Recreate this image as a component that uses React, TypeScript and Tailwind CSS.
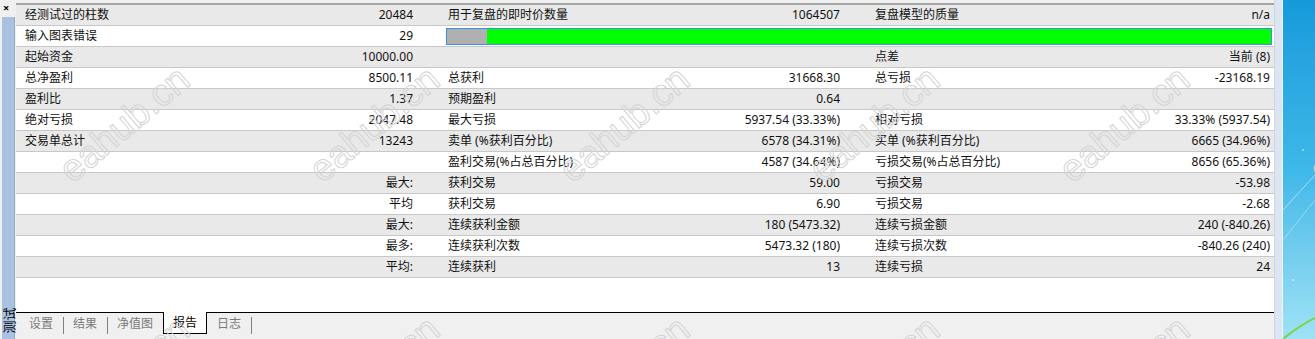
import React from "react";

type Row = [string, string, string, string, string, string];

const rows: Row[] = [
  ["经测试过的柱数", "20484", "用于复盘的即时价数量", "1064507", "复盘模型的质量", "n/a"],
  ["输入图表错误", "29", "", "", "", ""],
  ["起始资金", "10000.00", "", "", "点差", "当前 (8)"],
  ["总净盈利", "8500.11", "总获利", "31668.30", "总亏损", "-23168.19"],
  ["盈利比", "1.37", "预期盈利", "0.64", "", ""],
  ["绝对亏损", "2047.48", "最大亏损", "5937.54 (33.33%)", "相对亏损", "33.33% (5937.54)"],
  ["交易单总计", "13243", "卖单 (%获利百分比)", "6578 (34.31%)", "买单 (%获利百分比)", "6665 (34.96%)"],
  ["", "", "盈利交易(%占总百分比)", "4587 (34.64%)", "亏损交易(%占总百分比)", "8656 (65.36%)"],
  ["", "最大:", "获利交易", "59.00", "亏损交易", "-53.98"],
  ["", "平均", "获利交易", "6.90", "亏损交易", "-2.68"],
  ["", "最大:", "连续获利金额", "180 (5473.32)", "连续亏损金额", "240 (-840.26)"],
  ["", "最多:", "连续获利次数", "5473.32 (180)", "连续亏损次数", "-840.26 (240)"],
  ["", "平均:", "连续获利", "13", "连续亏损", "24"],
];

const font = "[font-family:'Noto_Sans','Noto_Sans_CJK_SC',sans-serif]";

function Group({ label, value, w, pl, pr }: { label: string; value: string; w: string; pl: string; pr: string }) {
  return (
    <div className={`${w} ${pl} ${pr} flex items-center justify-between h-full`}>
      <span className="whitespace-nowrap">{label}</span>
      <span className="whitespace-nowrap">{value}</span>
    </div>
  );
}

export default function App() {
  const wm = [124, 374, 624, 874, 1124, 1374];
  return (
    <div className={`relative w-[1315px] h-[339px] overflow-hidden bg-[#f0f0f0] flex ${font} text-[12px] text-[#111] leading-none`}>
      {/* left strip */}
      <div className="w-[16px] h-full flex flex-col">
        <div className="h-[17px] flex items-start pl-[3px] pt-[2px] text-[11px] font-bold text-black">×</div>
        <div className="flex-1 ml-[2px] w-[13px] bg-[#a8c2e0] border-r border-[#8fa9c8] flex flex-col justify-end">
          <div className="w-[13px] h-[34px] mb-[2px] flex items-center justify-center">
            <span className="inline-block whitespace-nowrap -rotate-90 text-[13px] text-black">测试</span>
          </div>
        </div>
      </div>

      {/* main panel */}
      <div className="w-[1258px] h-full flex flex-col">
        <div className="h-[3px]" />
        <div className="border-t-2 border-[#a6a6a6] flex flex-col">
          {rows.map((r, i) => (
            <div
              key={i}
              className={`h-[21px] flex border-b border-[#c8c8c8] ${i % 2 === 0 ? "bg-[#e9e9e9]" : "bg-white"}`}
            >
              <Group label={r[0]} value={r[1]} w="w-[423px]" pl="pl-[9px]" pr="pr-[26px]" />
              {i === 1 ? (
                <div className="flex-1 flex items-center pl-[7px] pr-[2px]">
                  <div className="w-full h-[17px] border border-[#3d8fe8] flex">
                    <div className="w-[40px] h-full bg-[#b0b0b0]" />
                    <div className="flex-1 h-full bg-[#00ff00]" />
                  </div>
                </div>
              ) : (
                <>
                  <Group label={r[2]} value={r[3]} w="w-[425px]" pl="pl-[9px]" pr="pr-[24px]" />
                  <Group label={r[4]} value={r[5]} w="w-[410px]" pl="pl-[11px]" pr="pr-[4px]" />
                </>
              )}
            </div>
          ))}
        </div>
        <div className="flex-1 bg-white" />
        {/* tabs */}
        <div className="h-[27px] border-t border-black flex items-start text-[#7a7a7a] bg-[#f0f0f0]">
          <div className="h-[21px] flex items-center pl-[13px]">设置</div>
          <div className="h-[17px] w-px bg-[#808080] mt-[4px] ml-[10px]" />
          <div className="h-[21px] flex items-center ml-[9px]">结果</div>
          <div className="h-[17px] w-px bg-[#808080] mt-[4px] ml-[10px]" />
          <div className="h-[21px] flex items-center ml-[9px]">净值图</div>
          <div className="h-[22px] -mt-px ml-[10px] bg-white border-x border-b border-black px-[9px] flex items-center text-black">报告</div>
          <div className="h-[21px] flex items-center ml-[10px]">日志</div>
          <div className="h-[17px] w-px bg-[#808080] mt-[4px] ml-[10px]" />
        </div>
      </div>

      {/* right frame + desktop */}
      <div className="w-[1px] h-full bg-[#cfd6de]" />
      <div className="w-[7px] h-full bg-[#dbe6f2]" />
      <div className="w-[1px] h-full bg-[#f4f8fc]" />
      <div className="flex-1 h-full bg-gradient-to-b from-[#169adb] via-[#3db8e8] to-[#9fe2f5] relative overflow-hidden">
        <svg className="absolute inset-0" width="32" height="339" viewBox="0 0 32 339">
          <path d="M0 210 L32 175" stroke="#ffffff" strokeOpacity="0.5" strokeWidth="1" />
          <path d="M0 240 L32 200" stroke="#ffffff" strokeOpacity="0.35" strokeWidth="1" />
          <path d="M0 339 Q16 326 32 318" stroke="#7bd44a" strokeWidth="2" fill="none" />
          <circle cx="20" cy="150" r="1" fill="#fff" fillOpacity="0.6" />
          <circle cx="10" cy="280" r="1" fill="#fff" fillOpacity="0.6" />
        </svg>
      </div>

      {/* watermarks */}
      {wm.map((x) =>
        [124, 374].map((y) => (
          <span
            key={`${x}-${y}`}
            aria-hidden="true"
            className="pointer-events-none absolute [font-family:'Liberation_Sans',sans-serif] text-[38px] text-transparent [-webkit-text-stroke:1px_#d4d4d4] whitespace-nowrap -translate-x-1/2 -translate-y-1/2 -rotate-[40deg] leading-none"
            style={{ left: x, top: y }}
          >
            eahub.cn
          </span>
        ))
      )}
    </div>
  );
}
